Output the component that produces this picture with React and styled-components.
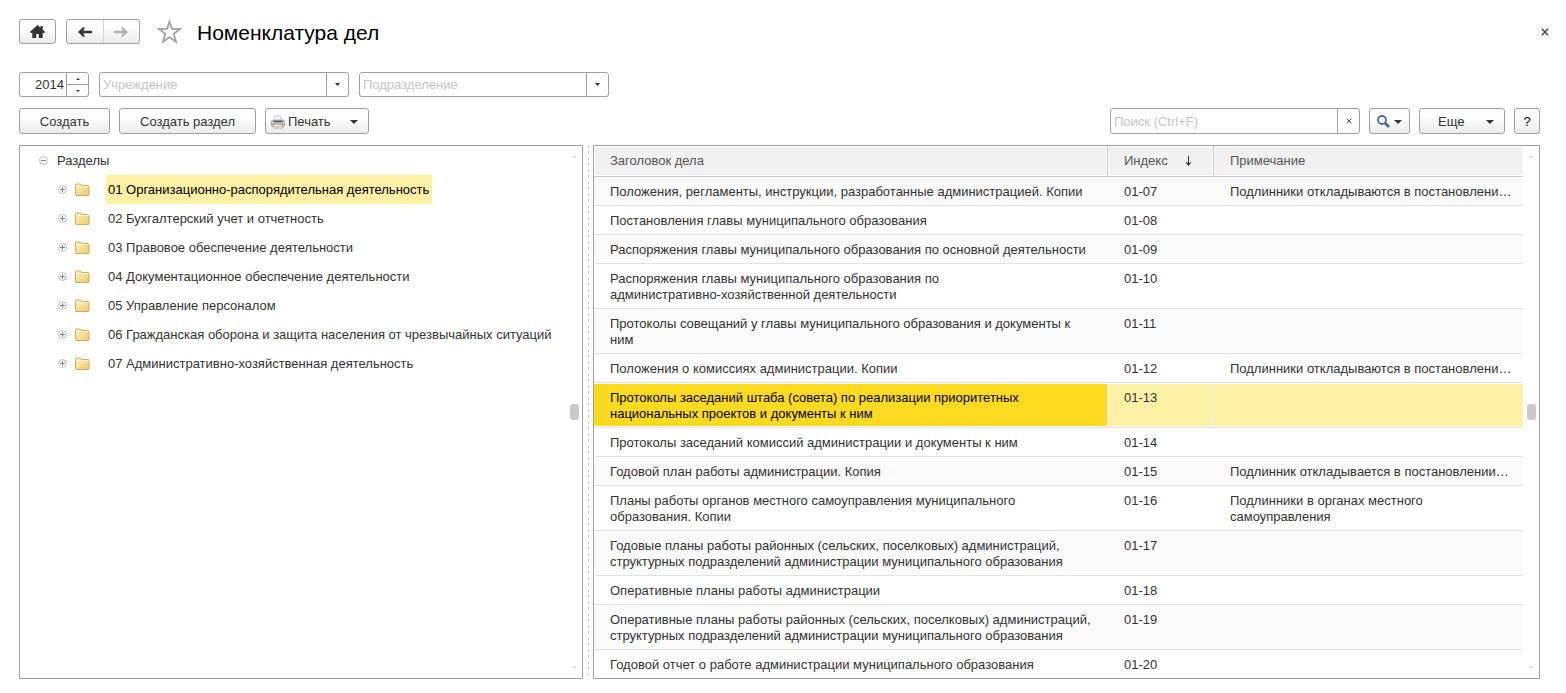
import React from "react";
import styled, { createGlobalStyle, css } from "styled-components";

const GlobalStyle = createGlobalStyle`
  * {
    box-sizing: border-box;
  }

  body {
    margin: 0;
    background: #fff;
    color: #333;
    font-family: "Liberation Sans", Arial, sans-serif;
    font-size: 13px;
    line-height: 16px;
  }

  button,
  input {
    font: inherit;
    color: inherit;
  }
`;

const Page = styled.main`
  padding: 19px 26px 14px 19px;
`;

const TitleBar = styled.header`
  display: flex;
  align-items: center;
  height: 25px;
`;

const Title = styled.h1`
  margin: 3px 0 0 15px;
  font-size: 21px;
  font-weight: 400;
  line-height: 24px;
  color: #000;
`;

const buttonFace = css`
  border: 1px solid #a0a0a0;
  border-radius: 3px;
  background: linear-gradient(#fff 30%, #ebebeb);
`;

const Button = styled.button`
  ${buttonFace};
  display: flex;
  align-items: center;
  justify-content: center;
  gap: ${(props) => props.$gap || 0}px;
  width: ${(props) => props.$width}px;
  height: ${(props) => (props.$small ? 25 : 26)}px;
  padding: ${(props) => (props.$small ? 0 : "1px 0 0")};
  color: ${(props) => (props.$dark ? "#000" : "#333")};
  cursor: pointer;
`;

const MenuButton = styled(Button)`
  justify-content: flex-start;
  padding: 1px 10px 0 ${(props) => props.$inset}px;

  > svg:last-child {
    margin-left: auto;
  }
`;

const NavGroup = styled.div`
  ${buttonFace};
  display: flex;
  width: 74px;
  height: 25px;
  margin: 0 17px 0 10px;
`;

const NavButton = styled.button`
  display: flex;
  flex: 1;
  align-items: center;
  justify-content: center;
  padding: 0;
  border: 0;
  background: none;

  & + & {
    border-left: 1px solid #d4d4d4;
  }
`;

const PlainButton = styled.button`
  display: flex;
  align-items: center;
  justify-content: center;
  padding: 0;
  border: 0;
  background: none;
`;

const CloseButton = styled(PlainButton)`
  width: 16px;
  height: 16px;
  margin: 0 -13px 0 auto;
`;

const Filters = styled.div`
  display: flex;
  gap: 10px;
  margin-top: 28px;
`;

const Field = styled.div`
  display: flex;
  width: ${(props) => props.$width}px;
  height: ${(props) => (props.$tall ? 26 : 25)}px;
  border: 1px solid #a0a0a0;
  border-radius: 3px;
  background: #fff;
`;

const Input = styled.input`
  flex: 1;
  min-width: 0;
  padding: 1px 2px 0 3px;
  border: 0;
  outline: 0;
  background: none;
  text-align: ${(props) => (props.$right ? "right" : "left")};

  &::placeholder {
    color: #c4c4c4;
    opacity: 1;
  }
`;

const FieldButton = styled(PlainButton)`
  width: 22px;
  border-left: 1px solid #a0a0a0;
`;

const Spinner = styled.div`
  display: flex;
  flex-direction: column;
  width: 22px;
  border-left: 1px solid #a0a0a0;
`;

const SpinButton = styled(PlainButton)`
  flex: 1;

  & + & {
    border-top: 1px solid #a0a0a0;
  }
`;

const Toolbar = styled.div`
  display: flex;
  justify-content: space-between;
  margin-top: 11px;
`;

const ToolGroup = styled.div`
  display: flex;
  gap: 9px;
`;

const Panels = styled.div`
  display: grid;
  grid-template-columns: 564fr 10px 947fr;
  margin-top: 11px;
`;

const Panel = styled.section`
  display: flex;
  min-width: 0;
  border: 1px solid #a0a0a0;
`;

const Splitter = styled.div`
  width: 1px;
  margin-left: 5px;
  background: repeating-linear-gradient(#ccc 0 3px, transparent 3px 6px);
`;

const ScrollGutter = styled.div`
  display: flex;
  flex: none;
  flex-direction: column;
  align-items: center;
  justify-content: space-between;
  width: 16px;
  padding: 9px 0;
`;

const Thumb = styled.div`
  width: 9px;
  height: 16px;
  border-radius: 3px;
  background: #c9c9c9;
`;

const Tree = styled.ul`
  flex: 1;
  min-width: 0;
  margin: 0;
  padding: 0;
  list-style: none;
`;

const TreeRow = styled.li`
  display: flex;
  align-items: center;
  height: 29px;
  padding-left: ${(props) => (props.$root ? 19 : 38)}px;
`;

const FolderSlot = styled.span`
  display: flex;
  width: 28px;
  margin-left: 8px;
`;

const TreeLabel = styled.span`
  padding: 7px 3px 6px 2px;
  margin-left: ${(props) => (props.$root ? 7 : 3)}px;
  white-space: nowrap;
  color: ${(props) => (props.$active ? "#000" : "#333")};
  background: ${(props) => (props.$active ? "#fcf0a4" : "none")};
`;

const Table = styled.table`
  flex: 1;
  min-width: 0;
  table-layout: fixed;
  border-collapse: separate;
  border-spacing: 0;
`;

const HeadCell = styled.th`
  height: 31px;
  padding: 0 16px;
  border-bottom: 1px solid #c8c8c8;
  background: #f1f1f1;
  box-shadow: inset 0 0 0 1px #fff;
  color: #555;
  font-weight: 400;
  text-align: left;

  &:not(:last-child) {
    border-right: 1px solid #c8c8c8;
  }
`;

const SortLabel = styled.span`
  display: flex;
  align-items: center;
  gap: 17px;
`;

const Cell = styled.td`
  padding: 7px 16px 5px;
  border-bottom: 1px solid #e2e2e2;
  box-shadow: inset 0 1px #fff, inset 0 -1px #fff;
  vertical-align: top;
  white-space: pre-line;

  &:last-child {
    padding-right: 8px;
  }
`;

const Row = styled.tr`
  background: ${(props) => (props.$striped ? "#fafafa" : "#fff")};

  &:last-child ${Cell} {
    border-bottom: 0;
  }

  ${(props) =>
    props.$active &&
    css`
      background: #fcf0a4;

      ${Cell}:first-child {
        background: #fbda20;
        color: #000;
      }

      ${Cell}:not(:last-child) {
        box-shadow: inset 0 1px #fff, inset -1px -1px #fff;
      }
    `}
`;

const Caret = ({ size = 8, up, color = "#333" }) => (
  <svg width={size} height={Math.ceil(size / 2)} viewBox="0 0 8 4" preserveAspectRatio="none" aria-hidden="true">
    <path d={up ? "M0 4 4 0l4 4z" : "M0 0h8L4 4z"} fill={color} />
  </svg>
);

const Cross = ({ size, width = 1.4, color = "#444" }) => (
  <svg width={size} height={size} viewBox="0 0 8 8" aria-hidden="true">
    <path d="m.8.8 6.4 6.4M7.2.8.8 7.2" stroke={color} strokeWidth={width} />
  </svg>
);

const HomeIcon = () => (
  <svg width="15" height="13" viewBox="0 0 15 13" aria-hidden="true">
    <path
      d="M7.500 0 0 6.800l.9 1.100h1.400V13h3.900V9h2.600v4h3.900V7.900h1.400l.9-1.100-2.300-2.100V1.100h-2.200v1.600z"
      fill="#333"
    />
  </svg>
);

const ArrowIcon = ({ right }) => (
  <svg width="14" height="10" viewBox="0 0 14 10" aria-hidden="true">
    <path
      d="M0 5 5 .3h2L5.200 3.700H14v2.600H5.200L7 9.700H5z"
      fill={right ? "#b0b0b0" : "#333"}
      transform={right ? "matrix(-1 0 0 1 14 0)" : undefined}
    />
  </svg>
);

const StarIcon = () => (
  <svg width="25" height="25" viewBox="0 0 25 25" aria-hidden="true">
    <path
      d="m12.500 2.800 2.500 7.100 8.100.1-6.400 4.800 2.300 8-6.500-4.600L6 22.800l2.300-8L1.900 10l8.100-.1z"
      fill="#fff"
      stroke="#a3a3a3"
      strokeWidth="1.800"
    />
  </svg>
);

const PrinterIcon = () => (
  <svg width="14" height="14" viewBox="0 0 14 14" aria-hidden="true">
    <path d="M3 6 3.500.9h6L11 6z" fill="#eef4fa" stroke="#b9c6d2" strokeWidth=".8" />
    <rect x=".4" y="5.200" width="13.200" height="6.400" rx="1.600" fill="#d0ccc8" stroke="#989490" strokeWidth=".8" />
    <path d="M2.500 6.500h9" stroke="#5c5654" strokeWidth="1.600" />
    <path d="M1.500 9.300h11" stroke="#8c8682" />
    <path d="m3.300 9.500-.8 3.600h9l-.8-3.600z" fill="#faf6f0" stroke="#b0a8a0" strokeWidth=".8" />
    <path d="M4 11.700h6" stroke="#dcae88" />
  </svg>
);

const SearchIcon = () => (
  <svg width="13" height="13" viewBox="0 0 13 13" aria-hidden="true">
    <circle cx="5" cy="5" r="4" fill="none" stroke="#4a6c93" strokeWidth="1.800" />
    <path d="m8 8 4 4" stroke="#4a6c93" strokeWidth="2.600" />
  </svg>
);

const FolderIcon = () => (
  <svg width="15" height="13" viewBox="0 0 15 13" aria-hidden="true">
    <defs>
      <linearGradient id="folder" x1="0" y1="0" x2="1" y2="1">
        <stop offset="0" stopColor="#fdf3bd" />
        <stop offset="1" stopColor="#ebca6c" />
      </linearGradient>
    </defs>
    <path
      d="M.5 11.500v-10l.5-.5h4.500l1 1.500h7l.5.5v9l-.5.5H1z"
      fill="url(#folder)"
      stroke="#d0ab58"
    />
    <path d="M1.500 3.500h12" stroke="#fff8d8" />
  </svg>
);

const ToggleIcon = ({ open }) => (
  <svg width="9" height="9" viewBox="0 0 9 9" aria-hidden="true">
    <circle cx="4.500" cy="4.500" r="4" fill="#fff" stroke="#b8b8b8" strokeWidth=".9" />
    <path d={open ? "M2 4.500h5" : "M2 4.500h5M4.500 2v5"} stroke="#808080" />
  </svg>
);

const SortIcon = () => (
  <svg width="7" height="10" viewBox="0 0 7 10" aria-hidden="true">
    <path d="M3.500 0v9" stroke="#333" />
    <path d="M.5 6.300h1.300l1.700 1.500 1.700-1.500h1.300l-3 3.700z" fill="#333" />
  </svg>
);

const sections = [
  "01 Организационно-распорядительная деятельность",
  "02 Бухгалтерский учет и отчетность",
  "03 Правовое обеспечение деятельности",
  "04 Документационное обеспечение деятельности",
  "05 Управление персоналом",
  "06 Гражданская оборона и защита населения от чрезвычайных ситуаций",
  "07 Административно-хозяйственная деятельность",
];

const files = [
  ["01-07", "Положения, регламенты, инструкции, разработанные администрацией. Копии", "Подлинники откладываются в постановлени…"],
  ["01-08", "Постановления главы муниципального образования"],
  ["01-09", "Распоряжения главы муниципального образования по основной деятельности"],
  ["01-10", "Распоряжения главы муниципального образования по\nадминистративно-хозяйственной деятельности"],
  ["01-11", "Протоколы совещаний у главы муниципального образования и документы к ним"],
  ["01-12", "Положения о комиссиях администрации. Копии", "Подлинники откладываются в постановлени…"],
  ["01-13", "Протоколы заседаний штаба (совета) по реализации приоритетных национальных проектов и документы к ним"],
  ["01-14", "Протоколы заседаний комиссий администрации и документы к ним"],
  ["01-15", "Годовой план работы администрации. Копия", "Подлинник откладывается в постановлении…"],
  ["01-16", "Планы работы органов местного самоуправления муниципального образования. Копии", "Подлинники в органах местного самоуправления"],
  ["01-17", "Годовые планы работы районных (сельских, поселковых) администраций, структурных подразделений администрации муниципального образования"],
  ["01-18", "Оперативные планы работы администрации"],
  ["01-19", "Оперативные планы работы районных (сельских, поселковых) администраций, структурных подразделений администрации муниципального образования"],
  ["01-20", "Годовой отчет о работе администрации муниципального образования"],
];

const Scrollbar = () => (
  <ScrollGutter>
    <Caret up size={5} color="#ddd" />
    <Thumb />
    <Caret size={5} color="#ddd" />
  </ScrollGutter>
);

const SelectField = ({ label }) => (
  <Field $width={250}>
    <Input aria-label={label} placeholder={label} />
    <FieldButton aria-label={`${label}: выбрать`}>
      <Caret size={5} />
    </FieldButton>
  </Field>
);

const App = () => (
  <>
    <GlobalStyle />
    <Page>
      <TitleBar>
        <Button $width={37} $small aria-label="Домой">
          <HomeIcon />
        </Button>
        <NavGroup>
          <NavButton aria-label="Назад">
            <ArrowIcon />
          </NavButton>
          <NavButton aria-label="Вперед">
            <ArrowIcon right />
          </NavButton>
        </NavGroup>
        <PlainButton aria-label="В избранное">
          <StarIcon />
        </PlainButton>
        <Title>Номенклатура дел</Title>
        <CloseButton aria-label="Закрыть">
          <Cross size={8} />
        </CloseButton>
      </TitleBar>

      <Filters>
        <Field $width={70}>
          <Input $right aria-label="Год" defaultValue="2014" />
          <Spinner>
            <SpinButton aria-label="Больше">
              <Caret up size={4} />
            </SpinButton>
            <SpinButton aria-label="Меньше">
              <Caret size={4} />
            </SpinButton>
          </Spinner>
        </Field>
        <SelectField label="Учреждение" />
        <SelectField label="Подразделение" />
      </Filters>

      <Toolbar>
        <ToolGroup>
          <Button $width={91}>Создать</Button>
          <Button $width={137}>Создать раздел</Button>
          <MenuButton $width={104} $gap={3} $inset={5}>
            <PrinterIcon />
            Печать
            <Caret />
          </MenuButton>
        </ToolGroup>
        <ToolGroup>
          <Field $width={250} $tall>
            <Input aria-label="Поиск" placeholder="Поиск (Ctrl+F)" />
            <FieldButton aria-label="Очистить">
              <Cross size={6} width={1.2} />
            </FieldButton>
          </Field>
          <Button $width={41} $gap={4} aria-label="Найти">
            <SearchIcon />
            <Caret />
          </Button>
          <MenuButton $width={86} $inset={18}>
            Еще
            <Caret />
          </MenuButton>
          <Button $width={26} $dark>
            ?
          </Button>
        </ToolGroup>
      </Toolbar>

      <Panels>
        <Panel>
          <Tree>
            <TreeRow $root>
              <ToggleIcon open />
              <TreeLabel $root>Разделы</TreeLabel>
            </TreeRow>
            {sections.map((name, i) => (
              <TreeRow key={name}>
                <ToggleIcon />
                <FolderSlot>
                  <FolderIcon />
                </FolderSlot>
                <TreeLabel $active={i === 0}>{name}</TreeLabel>
              </TreeRow>
            ))}
          </Tree>
          <Scrollbar />
        </Panel>
        <Splitter />
        <Panel>
          <Table>
            <colgroup>
              <col />
              <col width="106" />
              <col width="309" />
            </colgroup>
            <thead>
              <tr>
                <HeadCell>Заголовок дела</HeadCell>
                <HeadCell>
                  <SortLabel>
                    Индекс
                    <SortIcon />
                  </SortLabel>
                </HeadCell>
                <HeadCell>Примечание</HeadCell>
              </tr>
            </thead>
            <tbody>
              {files.map(([index, title, note], i) => (
                <Row key={index} $striped={i % 2 === 0} $active={index === "01-13"}>
                  <Cell>{title}</Cell>
                  <Cell>{index}</Cell>
                  <Cell>{note}</Cell>
                </Row>
              ))}
            </tbody>
          </Table>
          <Scrollbar />
        </Panel>
      </Panels>
    </Page>
  </>
);

export default App;
